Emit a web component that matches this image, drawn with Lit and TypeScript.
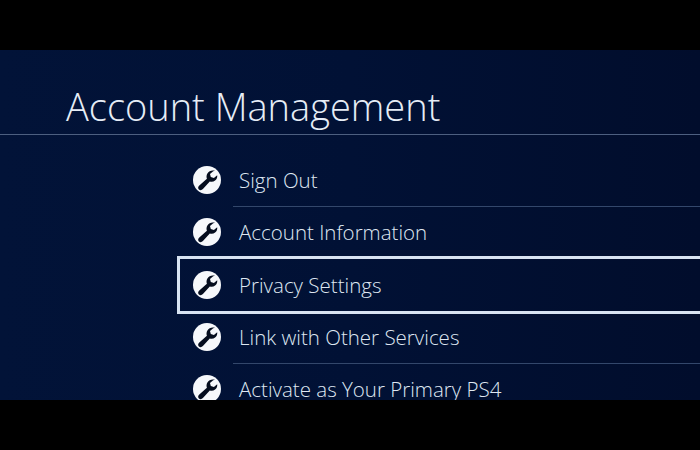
import { LitElement, html, css, svg } from 'lit';
import { customElement } from 'lit/decorators.js';

const items = [
  'Sign Out',
  'Account Information',
  'Privacy Settings',
  'Link with Other Services',
  'Activate as Your Primary PS4',
];
const selectedIndex = 2;

// white disc with a dark wrench, head at top right
const wrench = svg`
  <circle cx="14" cy="14" r="14" fill="#f6f8fb"></circle>
  <path fill="#050d1e" d="M22 4.800c-2.900-1-6.100 0-7.600 2.600-1 1.700-1.100 3.600-.5 5.300L6.300 19.500c-1.400 1.300-1.500 2.900-.4 4 1.100 1.100 2.800 1 4-.4l6.900-7.700c1.800.6 3.800.3 5.300-.9 1.700-1.300 2.400-3.300 2.100-5.300l-3.300 2.800-3.100-.9-.8-3 3.200-2.900z"></path>
`;

@customElement('app-root')
export class AppRoot extends LitElement {
  static styles = css`
    :host {
      display: block;
      width: 700px;
      height: 450px;
      background: #000;
      overflow: hidden;
      font-family: 'Open Sans', sans-serif;
    }
    .screen {
      margin-top: 50px;
      height: 350px;
      overflow: hidden;
      background: linear-gradient(90deg, #021338 0%, #011135 50%, #010d2c 100%);
    }
    .header {
      height: 85px;
      box-sizing: border-box;
      padding: 31px 0 0 66px;
      border-bottom: 1px solid #4d5f80;
    }
    h1 {
      margin: 0;
      font-size: 38px;
      line-height: 50px;
      font-weight: 300;
      color: #e6edf6;
    }
    .list {
      padding: 19px 0 0 178px;
    }
    .row {
      position: relative;
      height: 52.3px;
      box-sizing: border-box;
      display: flex;
      align-items: center;
      padding-left: 15px;
      margin-right: -10px;
      gap: 18px;
    }
    .row .icon {
      flex: none;
      width: 28px;
      height: 28px;
    }
    .label {
      font-size: 20.5px;
      font-weight: 300;
      color: #dfe7f2;
      white-space: nowrap;
    }
    .divider {
      position: absolute;
      left: 55px;
      right: 0;
      bottom: -1px;
      height: 1px;
      background: #33476b;
    }
    .selected::before {
      content: '';
      position: absolute;
      inset: -3px 0 -3px -1px;
      border: 3.5px solid #d8e3f2;
    }
  `;

  render() {
    return html`
      <div class="screen">
        <div class="header"><h1>Account Management</h1></div>
        <div class="list">
          ${items.map((label, i) => html`
            <div class="row ${i === selectedIndex ? 'selected' : ''}">
              <svg class="icon" viewBox="0 0 28 28">${wrench}</svg>
              <span class="label">${label}</span>
              ${i === 0 || i === 3 ? html`<div class="divider"></div>` : ''}
            </div>
          `)}
        </div>
      </div>
    `;
  }
}
